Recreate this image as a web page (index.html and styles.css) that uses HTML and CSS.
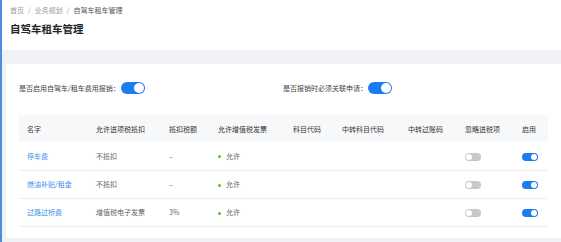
FILE: index.html
```html
<!DOCTYPE html>
<html lang="zh-CN">
<head>
    <meta charset="UTF-8">
    <meta name="viewport" content="width=device-width, initial-scale=1.0">
    <title>自驾车租车管理</title>
    <link rel="stylesheet" href="styles.css">
</head>
<body>
    <div class="page-header">
        <div class="breadcrumb">
            <span>首页</span><span class="sep">/</span><span>业务规划</span><span class="sep">/</span><span class="current">自驾车租车管理</span>
        </div>
        <h1>自驾车租车管理</h1>
    </div>

    <div class="content">
        <div class="card">
            <div class="settings">
                <div class="setting">
                    <span>是否启用自驾车/租车费用报销：</span>
                    <span class="switch switch-lg on"></span>
                </div>
                <div class="setting">
                    <span>是否报销时必须关联申请：</span>
                    <span class="switch switch-lg on"></span>
                </div>
            </div>

            <table class="fee-table">
                <colgroup>
                    <col style="width: 69px">
                    <col style="width: 73px">
                    <col style="width: 49px">
                    <col style="width: 75px">
                    <col style="width: 49px">
                    <col style="width: 66px">
                    <col style="width: 57px">
                    <col style="width: 57px">
                    <col style="width: 34px">
                </colgroup>
                <thead>
                    <tr>
                        <th>名字</th>
                        <th>允许进项税抵扣</th>
                        <th>抵扣税额</th>
                        <th>允许增值税发票</th>
                        <th>科目代码</th>
                        <th>中转科目代码</th>
                        <th>中转过账码</th>
                        <th>忽略进税项</th>
                        <th>启用</th>
                    </tr>
                </thead>
                <tbody>
                    <tr>
                        <td><a href="#" class="link">停车费</a></td>
                        <td>不抵扣</td>
                        <td>–</td>
                        <td><span class="dot"></span>允许</td>
                        <td></td>
                        <td></td>
                        <td></td>
                        <td><span class="switch"></span></td>
                        <td><span class="switch on"></span></td>
                    </tr>
                    <tr>
                        <td><a href="#" class="link">燃油补贴/租金</a></td>
                        <td>不抵扣</td>
                        <td>–</td>
                        <td><span class="dot"></span>允许</td>
                        <td></td>
                        <td></td>
                        <td></td>
                        <td><span class="switch"></span></td>
                        <td><span class="switch on"></span></td>
                    </tr>
                    <tr>
                        <td><a href="#" class="link">过路过桥费</a></td>
                        <td>增值税电子发票</td>
                        <td>3%</td>
                        <td><span class="dot"></span>允许</td>
                        <td></td>
                        <td></td>
                        <td></td>
                        <td><span class="switch"></span></td>
                        <td><span class="switch on"></span></td>
                    </tr>
                </tbody>
            </table>
        </div>
    </div>
</body>
</html>
```

FILE: styles.css
```css
* {
    margin: 0;
    padding: 0;
    box-sizing: border-box;
}

body {
    font-family: "Noto Sans CJK SC", "Noto Sans", sans-serif;
    font-size: 7px;
    color: #333;
    background: #f0f2f5;
    border-left: 2px solid #4a8fe0;
    min-height: 100vh;
}

.page-header {
    background: #fff;
    padding: 5px 8px 14px;
}

.breadcrumb {
    line-height: 10px;
    color: #999;
}

.breadcrumb .sep {
    margin: 0 4px;
}

.breadcrumb .current {
    color: #555;
}

h1 {
    margin-top: 7px;
    font-size: 10.5px;
    line-height: 14px;
    font-weight: 700;
    color: #262626;
}

.content {
    padding: 14px 0 4px 4px;
}

.card {
    background: #fff;
    padding: 18px 13px 11px;
}

.settings {
    display: grid;
    grid-template-columns: 264px auto;
    margin-bottom: 21px;
}

.setting {
    display: flex;
    align-items: center;
    height: 12px;
    color: #444;
}

.switch {
    display: inline-block;
    position: relative;
    width: 16px;
    height: 8px;
    border-radius: 4px;
    background: #c8c8c8;
    vertical-align: middle;
}

.switch::after {
    content: "";
    position: absolute;
    top: 1px;
    left: 1px;
    width: 6px;
    height: 6px;
    border-radius: 50%;
    background: #fff;
}

.switch.on {
    background: #1a7cf0;
}

.switch.on::after {
    left: 9px;
}

.switch-lg {
    width: 24px;
    height: 12px;
    border-radius: 6px;
    margin-left: 1px;
}

.switch-lg::after {
    width: 10px;
    height: 10px;
}

.switch-lg.on::after {
    left: 13px;
}

.fee-table {
    width: 529px;
    border-collapse: collapse;
    table-layout: fixed;
}

.fee-table th,
.fee-table td {
    text-align: left;
    padding: 0 0 0 8px;
    white-space: nowrap;
    overflow: hidden;
    line-height: 10px;
}

.fee-table th {
    height: 27px;
    background: #f7f8fa;
    font-weight: 400;
    color: #333;
}

.fee-table td {
    height: 28px;
    border-bottom: 1px solid #eee;
    color: #666;
}

.link {
    color: #3b8fee;
    text-decoration: none;
}

.dot {
    display: inline-block;
    width: 3px;
    height: 3px;
    border-radius: 50%;
    background: #52c41a;
    margin-right: 5px;
    vertical-align: middle;
}
```
